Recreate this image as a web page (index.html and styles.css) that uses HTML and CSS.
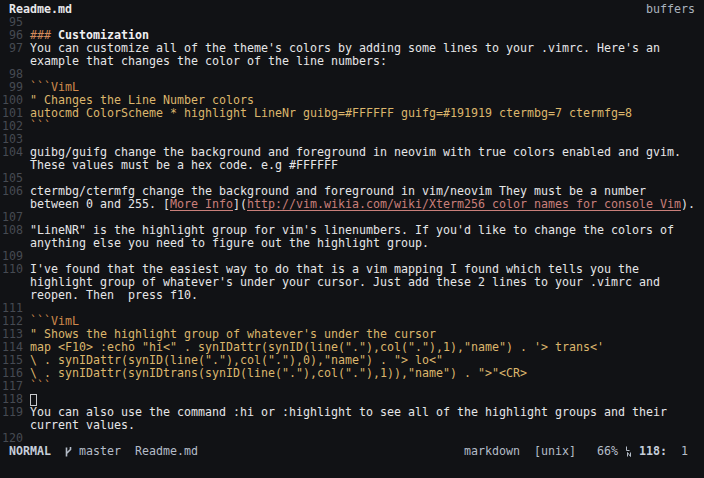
FILE: index.html
```html
<!DOCTYPE html>
<html>
<head>
<meta charset="utf-8">
<title>Readme.md</title>
<link rel="stylesheet" href="styles.css">
</head>
<body>
<div class="screen">
  <div class="tabline">
    <span class="tab-cur">Readme.md</span>
    <span class="tab-label">buffers</span>
  </div>

  <div class="buffer">
    <div class="line"><span class="ln">95</span><div class="txt"><div class="vl"></div></div></div>
    <div class="line"><span class="ln">96</span><div class="txt"><div class="vl"><span class="hmark">###</span> <span class="htitle">Customization</span></div></div></div>
    <div class="line"><span class="ln">97</span><div class="txt"><div class="vl">You can customize all of the theme's colors by adding some lines to your .vimrc. Here's an</div><div class="vl">example that changes the color of the line numbers:</div></div></div>
    <div class="line"><span class="ln">98</span><div class="txt"><div class="vl"></div></div></div>
    <div class="line"><span class="ln">99</span><div class="txt"><div class="vl fence">```VimL</div></div></div>
    <div class="line"><span class="ln">100</span><div class="txt"><div class="vl code">" Changes the Line Number colors</div></div></div>
    <div class="line"><span class="ln">101</span><div class="txt"><div class="vl code">autocmd ColorScheme * highlight LineNr guibg=#FFFFFF guifg=#191919 ctermbg=7 ctermfg=8</div></div></div>
    <div class="line"><span class="ln">102</span><div class="txt"><div class="vl fence">```</div></div></div>
    <div class="line"><span class="ln">103</span><div class="txt"><div class="vl"></div></div></div>
    <div class="line"><span class="ln">104</span><div class="txt"><div class="vl">guibg/guifg change the background and foreground in neovim with true colors enabled and gvim.</div><div class="vl">These values must be a hex code. e.g #FFFFFF</div></div></div>
    <div class="line"><span class="ln">105</span><div class="txt"><div class="vl"></div></div></div>
    <div class="line"><span class="ln">106</span><div class="txt"><div class="vl">ctermbg/ctermfg change the background and foreground in vim/neovim They must be a number</div><div class="vl">between 0 and 255. [<span class="link">More Info</span>](<span class="link">http://vim.wikia.com/wiki/Xterm256_color_names_for_console_Vim</span>).</div></div></div>
    <div class="line"><span class="ln">107</span><div class="txt"><div class="vl"></div></div></div>
    <div class="line"><span class="ln">108</span><div class="txt"><div class="vl">"LineNR" is the highlight group for vim's linenumbers. If you'd like to change the colors of</div><div class="vl">anything else you need to figure out the highlight group.</div></div></div>
    <div class="line"><span class="ln">109</span><div class="txt"><div class="vl"></div></div></div>
    <div class="line"><span class="ln">110</span><div class="txt"><div class="vl">I've found that the easiest way to do that is a vim mapping I found which tells you the</div><div class="vl">highlight group of whatever's under your cursor. Just add these 2 lines to your .vimrc and</div><div class="vl">reopen. Then  press f10.</div></div></div>
    <div class="line"><span class="ln">111</span><div class="txt"><div class="vl"></div></div></div>
    <div class="line"><span class="ln">112</span><div class="txt"><div class="vl fence">```VimL</div></div></div>
    <div class="line"><span class="ln">113</span><div class="txt"><div class="vl code">" Shows the highlight group of whatever's under the cursor</div></div></div>
    <div class="line"><span class="ln">114</span><div class="txt"><div class="vl code">map &lt;F10&gt; :echo "hi&lt;" . synIDattr(synID(line("."),col("."),1),"name") . '&gt; trans&lt;'</div></div></div>
    <div class="line"><span class="ln">115</span><div class="txt"><div class="vl code">\ . synIDattr(synID(line("."),col("."),0),"name") . "&gt; lo&lt;"</div></div></div>
    <div class="line"><span class="ln">116</span><div class="txt"><div class="vl code">\ . synIDattr(synIDtrans(synID(line("."),col("."),1)),"name") . "&gt;"&lt;CR&gt;</div></div></div>
    <div class="line"><span class="ln">117</span><div class="txt"><div class="vl fence">```</div></div></div>
    <div class="line"><span class="ln">118</span><div class="txt"><div class="vl"><span class="cursor"></span></div></div></div>
    <div class="line"><span class="ln">119</span><div class="txt"><div class="vl">You can also use the command :hi or :highlight to see all of the highlight groups and their</div><div class="vl">current values.</div></div></div>
    <div class="line"><span class="ln">120</span><div class="txt"><div class="vl"></div></div></div>
  </div>

  <div class="statusline">
    <div class="st-left"><span class="mode">NORMAL</span>  <svg class="ico" width="7" height="13" viewBox="0 0 7 13"><path d="M1.5 2.5V11.5M5.5 2V4.5L1.5 8.5" fill="none" stroke="#b4bcc8" stroke-width="1.6"/></svg> master  Readme.md</div>
    <div class="st-right">markdown  [unix]   66% <svg class="ico" width="7" height="13" viewBox="0 0 7 13"><path d="M1.5 1.5V5.5H4.5M2.5 11.5V7.5L5.5 11.5V7.5" fill="none" stroke="#b4bcc8" stroke-width="1"/></svg> <span class="pos">118:</span>  1</div>
  </div>
  <div class="cmdline"></div>
</div>
</body>
</html>
```

FILE: styles.css
```css
html, body {
  margin: 0;
  padding: 0;
  background: #111215;
}

body {
  font-family: "DejaVu Sans Mono", "Liberation Mono", monospace;
  font-size: 11.63px;
  line-height: 13px;
  color: #e6e6e8;
  width: 704px;
  height: 478px;
  overflow: hidden;
}

.screen {
  padding: 3px 2px 0;
  display: flex;
  flex-direction: column;
}

.tabline {
  height: 13px;
  display: flex;
  justify-content: space-between;
  padding: 0 7px;
  white-space: pre;
}

.tab-cur {
  font-weight: bold;
  color: #e8e8ea;
}

.tab-label {
  color: #aab2be;
}

.buffer {
  display: flex;
  flex-direction: column;
}

.line {
  display: flex;
}

.ln {
  flex: none;
  width: 21px;
  margin-right: 7px;
  text-align: right;
  color: #464a52;
  height: 13px;
  white-space: pre;
}

.txt {
  display: flex;
  flex-direction: column;
}

.vl {
  height: 13px;
  white-space: pre;
}

.hmark {
  color: #d3895a;
}

.htitle {
  font-weight: bold;
  color: #f0f0f2;
}

.fence {
  color: #cf8a4c;
}

.code {
  color: #dcb66c;
}

.link {
  color: #c97f7a;
  text-decoration: underline;
  text-underline-offset: 2px;
}

.cursor {
  display: inline-block;
  box-sizing: border-box;
  width: 7px;
  height: 12px;
  border: 1px solid #c8cacd;
  vertical-align: top;
  margin-top: 1px;
}

.statusline {
  height: 13px;
  display: flex;
  justify-content: space-between;
  padding: 0 14px 0 7px;
  white-space: pre;
  color: #b4bcc8;
}

.mode {
  font-weight: bold;
  color: #c6ceda;
}

.pos {
  font-weight: bold;
  color: #c6ceda;
}

.ico {
  vertical-align: top;
}

.cmdline {
  height: 13px;
}
```
